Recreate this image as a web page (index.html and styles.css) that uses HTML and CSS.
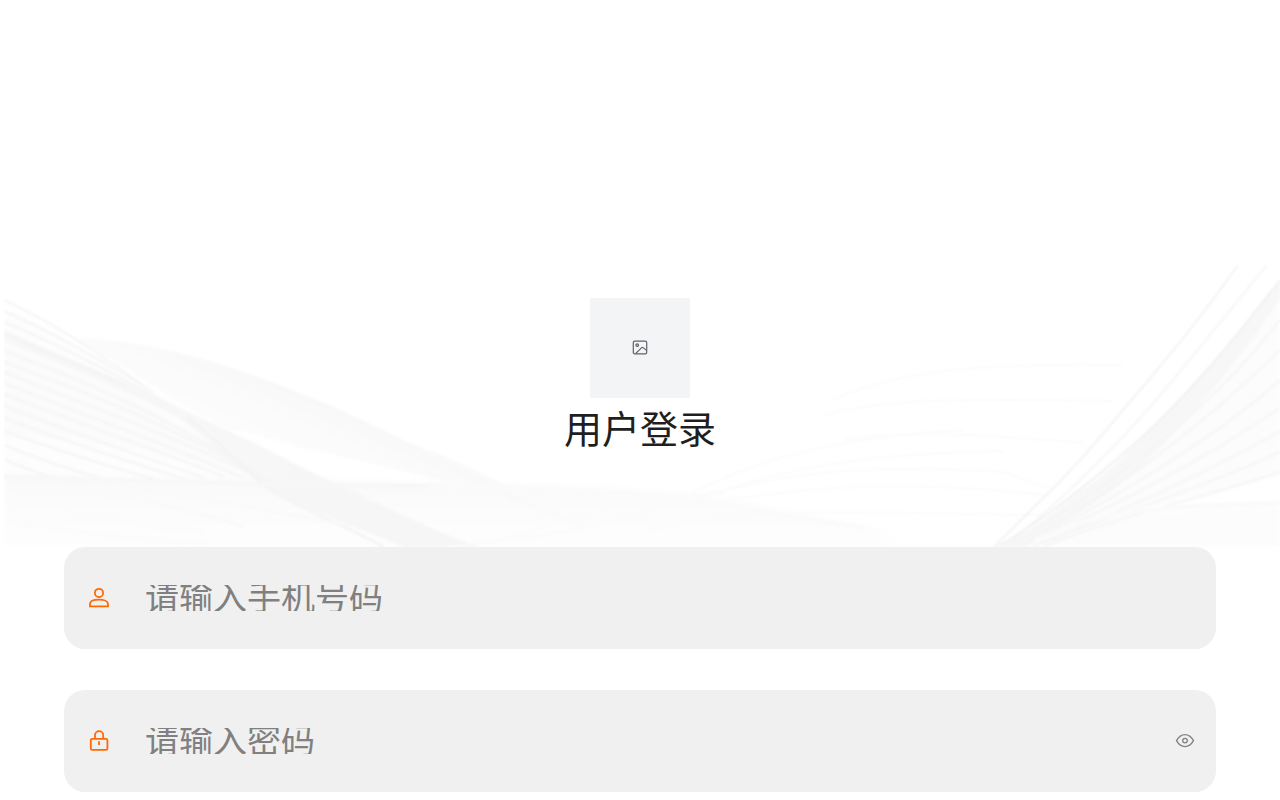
FILE: index.html
```html
<!DOCTYPE html>
<html lang="zh-CN">
<head>
<meta charset="utf-8">
<meta name="viewport" content="width=device-width, initial-scale=1">
<title>用户登录</title>
<link rel="stylesheet" href="styles.css">
</head>
<body>
<main class="login">
  <header class="hero">
    <svg class="waves" viewBox="0 0 1276 282" preserveAspectRatio="none" aria-hidden="true">
      <defs>
        <linearGradient id="veil" gradientUnits="userSpaceOnUse" x1="300" y1="128" x2="270" y2="200">
          <stop offset="0" stop-color="#f8f8f8"/>
          <stop offset=".4" stop-color="#fbfbfb"/>
          <stop offset="1" stop-color="#fdfdfd"/>
        </linearGradient>
        <linearGradient id="ribbon" gradientUnits="userSpaceOnUse" x1="0" y1="70" x2="470" y2="282">
          <stop offset="0" stop-color="#f7f7f7"/>
          <stop offset=".5" stop-color="#f7f7f7"/>
          <stop offset="1" stop-color="#f6f6f6"/>
        </linearGradient>
        <linearGradient id="haze" x1="0" y1="0" x2="0" y2="1">
          <stop offset="0" stop-color="#f9f9f9"/>
          <stop offset=".5" stop-color="#fcfcfc"/>
          <stop offset="1" stop-color="#fefefe"/>
        </linearGradient>
        <filter id="soft" color-interpolation-filters="sRGB"><feGaussianBlur stdDeviation="0.8"/></filter>
        <filter id="softer" color-interpolation-filters="sRGB"><feGaussianBlur stdDeviation="3"/></filter>
      </defs>
      <g filter="url(#softer)">
        <path fill="#fdfdfd" d="M0 40C80 75 130 125 230 170S380 250 470 282H0Z"/>
        <path fill="#fbfbfb" d="M0 78L120 126C180 160 220 190 262 222C170 190 80 165 0 172Z"/>
        <path fill="url(#haze)" d="M0 211C200 216 430 216 589 223S760 245 870 262L900 282H0Z"/>
        <path fill="#fcfcfc" d="M990 282C1100 245 1190 245 1276 240V282Z"/>
        <path fill="#fcfcfc" d="M1276 28L1223 96L1155 170L1080 232L996 282C1080 255 1180 240 1276 208Z"/>
      </g>
      <g filter="url(#soft)">
        <path fill="url(#veil)" d="M69 73C146 74 229 101 296 128S380 167 426 187S503 222 579 262C480 225 400 205 329 190C270 178 250 165 225 165C180 145 130 105 69 73Z"/>
        <path fill="url(#ribbon)" d="M0 65C55 90 90 103 123 118S190 150 229 168S290 200 329 217S410 258 475 282H400C340 258 310 248 263 222S200 165 160 145S50 97 0 76Z"/>
        <g fill="none" stroke="#f5f5f5" stroke-width="2">
          <path d="M0 35C50 58 90 85 140 121"/>
          <path d="M0 46C50 68 95 94 150 128"/>
          <path d="M0 57C55 80 105 105 165 140"/>
          <path d="M0 86C70 112 140 140 260 212"/>
          <path d="M0 97C80 127 150 152 270 218"/>
          <path d="M0 107C80 140 150 163 265 216"/>
          <path d="M0 118C80 150 150 175 240 213"/>
          <path d="M0 129C70 157 140 180 220 212"/>
          <path d="M0 141C60 165 130 188 200 213"/>
          <path d="M0 153C60 176 110 192 180 214"/>
          <path d="M0 166C40 180 90 198 150 214"/>
          <path d="M0 180C30 192 60 203 95 213"/>
          <path d="M0 194C20 203 35 209 50 213"/>
        </g>
        <g fill="none" stroke="#f4f4f4" stroke-width="3">
          <path d="M0 68C55 93 90 106 123 121"/>
          <path d="M183 152C215 175 240 205 263 222S330 255 380 282"/>
          <path d="M0 212C120 215 260 221 426 221" stroke="#f7f7f7" stroke-width="4"/>
          <path d="M40 214C100 230 170 238 240 262" stroke="#f9f9f9"/>
          <path d="M110 216C180 232 240 240 350 262" stroke="#f9f9f9"/>
          <path d="M0 230C60 240 110 262 200 266" stroke="#fbfbfb"/>
          <path d="M0 258C60 262 110 275 200 278" stroke="#fbfbfb"/>
        </g>
        <g fill="none" stroke="#fafafa" stroke-width="4">
          <path d="M426 188C470 203 520 235 579 262"/>
          <path d="M426 220C540 222 660 230 730 242S800 255 860 262"/>
        </g>
        <g fill="none" stroke="#fbfbfb" stroke-width="2">
          <path d="M440 282C540 275 600 230 720 228"/>
          <path d="M470 278C620 270 720 205 880 204S990 210 1045 222"/>
          <path d="M680 232C760 190 840 172 960 165"/>
          <path d="M690 236C770 205 860 188 1000 186"/>
          <path d="M700 240C800 220 900 215 1040 230"/>
          <path d="M820 150C890 132 970 134 1110 136"/>
          <path d="M830 134C900 104 980 98 1120 100"/>
          <path d="M840 174C900 168 940 166 1080 178"/>
          <path d="M640 265C790 238 900 250 1040 250"/>
        </g>
        <path fill="#f7f7f7" d="M1276 15C1223 84 1195 115 1163 148S1110 203 1079 225S1040 260 990 282H1020C1075 250 1100 233 1130 208S1230 105 1276 34Z"/>
        <g fill="none" stroke="#f5f5f5" stroke-width="2">
          <path d="M1234 0C1213 30 1179 75 1136 125S1079 195 1030 242L990 282" stroke="#f3f3f3"/>
          <path d="M1263 0C1230 40 1180 103 1146 142S1063 230 1009 275" stroke="#f6f6f6"/>
          <path d="M1276 15C1223 84 1195 115 1163 148S1050 250 996 280" stroke="#f1f1f1"/>
          <path d="M1276 55C1220 128 1130 208 1005 281"/>
          <path d="M1276 85C1210 150 1130 215 1015 281"/>
          <path d="M1276 115C1215 170 1120 228 1020 281"/>
          <path d="M1276 143C1210 188 1120 238 1020 281"/>
          <path d="M1276 166C1200 210 1120 245 1030 281"/>
          <path d="M1276 187C1200 222 1110 250 1030 281"/>
          <path d="M1276 207C1200 232 1120 250 1040 281"/>
        </g>
        <path fill="none" stroke="#fafafa" stroke-width="5" d="M1030 276C1110 240 1160 243 1276 238"/>
      </g>
    </svg>
    <div class="avatar" role="img" aria-label="图片">
      <svg class="picture" viewBox="0 0 16 16" aria-hidden="true">
        <rect x="1.3" y="1.2" width="13.4" height="12.6" rx="1.3"/>
        <circle cx="5.2" cy="5.1" r="1.3"/>
        <path d="M3.8 13.4L9.7 7.6Q10.4 7 11.1 7.6L14.5 10.4"/>
      </svg>
    </div>
    <h1 class="title">用户登录</h1>
  </header>
  <form class="form">
    <div class="field">
      <svg class="icon" viewBox="0 0 22 22" aria-hidden="true">
        <circle cx="11" cy="5.9" r="4.1"/>
        <path d="M2 19.3V16.9C2 14.2 6 12.6 11 12.6S20 14.2 20 16.9V19.3Z"/>
      </svg>
      <input class="input" type="tel" placeholder="请输入手机号码" aria-label="手机号码">
    </div>
    <div class="field">
      <svg class="icon" viewBox="0 0 22 22" aria-hidden="true">
        <rect x="2.8" y="8.8" width="16.6" height="11" rx="1.4"/>
        <path d="M7 8.6V5.2A4.1 4.1 0 0 1 15.2 5.2V8.6M11 11.3V15"/>
      </svg>
      <input class="input" type="password" placeholder="请输入密码" aria-label="密码">
      <button class="reveal" type="button" aria-label="显示密码">
        <svg class="eye" viewBox="0 0 20 20" aria-hidden="true">
          <path d="M1.5 9.6C6 1.7 14 1.7 18.5 9.6C14 17.5 6 17.5 1.5 9.6Z"/>
          <circle cx="10" cy="9.6" r="2.3"/>
        </svg>
      </button>
    </div>
  </form>
</main>
</body>
</html>
```
FILE: styles.css
```css
* { box-sizing: border-box; }

body {
  margin: 0;
  background: #fff;
  color: #1f1f1f;
  font-family: "Liberation Sans", "Noto Sans CJK SC", sans-serif;
}

.login {
  min-height: 100vh;
  padding-top: 265px;
}

.hero {
  position: relative;
  display: flex;
  flex-direction: column;
  align-items: center;
  gap: 4px;
  padding: 33px 0 89px;
}

.waves {
  position: absolute;
  z-index: -1;
  top: 0;
  left: 4px;
  width: calc(100% - 4px);
  height: 100%;
}

.avatar {
  display: grid;
  place-items: center;
  width: 100px;
  height: 100px;
  background: #f3f4f6;
}

.picture {
  width: 16px;
  height: 16px;
  fill: none;
  stroke: #5f6268;
  stroke-width: 1.2;
}

.title {
  margin: 0;
  font-size: 38px;
  font-weight: 400;
  line-height: 56px;
}

.form {
  display: flex;
  flex-direction: column;
  gap: 41px;
  padding: 0 5% 8px;
}

.field {
  display: flex;
  align-items: center;
  padding: 38px 20px 38px 24px;
  border-radius: 21px;
  background: #f0f0f0;
}

.icon {
  flex: none;
  width: 22px;
  height: 22px;
  margin-right: 35px;
  fill: none;
  stroke: #ff6a00;
  stroke-width: 1.8;
}

.input {
  flex: 1;
  min-width: 0;
  height: 26px;
  padding: 0;
  border: 0;
  outline: 0;
  background: none;
  color: #1f1f1f;
  font: inherit;
  font-size: 34px;
  line-height: 26px;
}

.input::placeholder {
  color: #808080;
  opacity: 1;
}

.reveal {
  flex: none;
  display: flex;
  padding: 0;
  border: 0;
  background: none;
  cursor: pointer;
}

.eye {
  width: 22px;
  height: 20px;
  fill: none;
  stroke: #808080;
  stroke-width: 1.3;
}
```
